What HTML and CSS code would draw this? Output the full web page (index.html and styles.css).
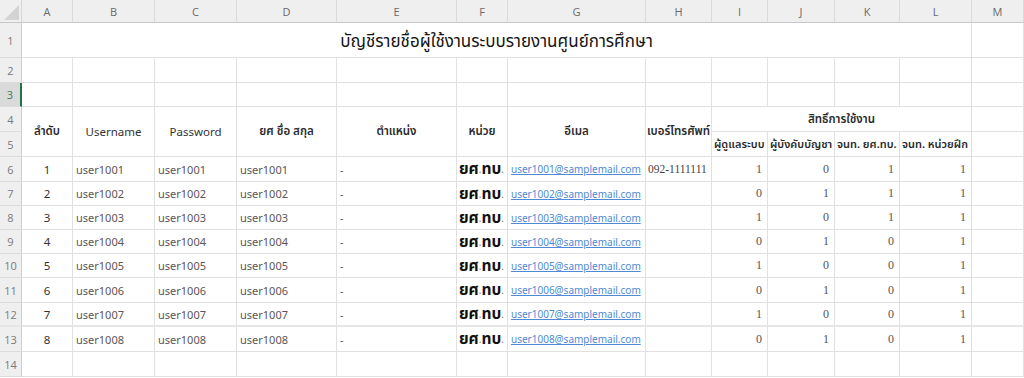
FILE: index.html
```html
<!DOCTYPE html>
<html lang="th">
<head>
<meta charset="utf-8">
<title>บัญชีรายชื่อผู้ใช้งาน</title>
<link rel="stylesheet" href="styles.css">
</head>
<body>
<div class="sheet">
  <div class="row colhead">
    <div class="corner"><svg width="22" height="23" viewBox="0 0 22 23"><polygon points="19,5 19,20 4,20" fill="#d3d3d3"/></svg></div>
    <div class="ch">A</div><div class="ch">B</div><div class="ch">C</div><div class="ch">D</div><div class="ch">E</div><div class="ch">F</div><div class="ch">G</div><div class="ch">H</div><div class="ch">I</div><div class="ch">J</div><div class="ch">K</div><div class="ch">L</div><div class="ch">M</div>
  </div>
  <div class="row">
    <div class="rh">1</div>
    <div class="cell title">บัญชีรายชื่อผู้ใช้งานระบบรายงานศูนย์การศึกษา</div>
    <div class="cell"></div>
  </div>
  <div class="row">
    <div class="rh">2</div>
    <div class="cell"></div><div class="cell"></div><div class="cell"></div><div class="cell"></div><div class="cell"></div><div class="cell"></div><div class="cell"></div><div class="cell"></div><div class="cell"></div><div class="cell"></div><div class="cell"></div><div class="cell"></div><div class="cell"></div>
  </div>
  <div class="row">
    <div class="rh sel">3</div>
    <div class="cell"></div><div class="cell"></div><div class="cell"></div><div class="cell"></div><div class="cell"></div><div class="cell"></div><div class="cell"></div><div class="cell"></div><div class="cell"></div><div class="cell"></div><div class="cell"></div><div class="cell"></div><div class="cell"></div>
  </div>
  <div class="row">
    <div class="rh">4</div>
    <div class="cell hd tall">ลำดับ</div>
    <div class="cell hd tall en">Username</div>
    <div class="cell hd tall en">Password</div>
    <div class="cell hd tall">ยศ ชื่อ สกุล</div>
    <div class="cell hd tall">ตำแหน่ง</div>
    <div class="cell hd tall">หน่วย</div>
    <div class="cell hd tall">อีเมล</div>
    <div class="cell hd tall">เบอร์โทรศัพท์</div>
    <div class="cell hd group">สิทธิ์การใช้งาน</div>
    <div class="cell"></div>
  </div>
  <div class="row">
    <div class="rh">5</div>
    <div class="cell hd sub">ผู้ดูแลระบบ</div>
    <div class="cell hd sub">ผู้บังคับบัญชา</div>
    <div class="cell hd sub">จนท. ยศ.ทบ.</div>
    <div class="cell hd sub">จนท. หน่วยฝึก</div>
    <div class="cell"></div>
  </div>

  <div class="row">
    <div class="rh">6</div>
    <div class="cell num">1</div><div class="cell txt">user1001</div><div class="cell txt">user1001</div><div class="cell txt">user1001</div><div class="cell txt">-</div>
    <div class="cell unit"><b>ยศ</b><i>.</i><b>ทบ</b><i>.</i></div>
    <div class="cell mail"><a href="#">user1001@samplemail.com</a></div>
    <div class="cell phone">092-1111111</div>
    <div class="cell val">1</div><div class="cell val">0</div><div class="cell val">1</div><div class="cell val">1</div><div class="cell"></div>
  </div>
  <div class="row">
    <div class="rh">7</div>
    <div class="cell num">2</div><div class="cell txt">user1002</div><div class="cell txt">user1002</div><div class="cell txt">user1002</div><div class="cell txt">-</div>
    <div class="cell unit"><b>ยศ</b><i>.</i><b>ทบ</b><i>.</i></div>
    <div class="cell mail"><a href="#">user1002@samplemail.com</a></div>
    <div class="cell phone"></div>
    <div class="cell val">0</div><div class="cell val">1</div><div class="cell val">1</div><div class="cell val">1</div><div class="cell"></div>
  </div>
  <div class="row">
    <div class="rh">8</div>
    <div class="cell num">3</div><div class="cell txt">user1003</div><div class="cell txt">user1003</div><div class="cell txt">user1003</div><div class="cell txt">-</div>
    <div class="cell unit"><b>ยศ</b><i>.</i><b>ทบ</b><i>.</i></div>
    <div class="cell mail"><a href="#">user1003@samplemail.com</a></div>
    <div class="cell phone"></div>
    <div class="cell val">1</div><div class="cell val">0</div><div class="cell val">1</div><div class="cell val">1</div><div class="cell"></div>
  </div>
  <div class="row">
    <div class="rh">9</div>
    <div class="cell num">4</div><div class="cell txt">user1004</div><div class="cell txt">user1004</div><div class="cell txt">user1004</div><div class="cell txt">-</div>
    <div class="cell unit"><b>ยศ</b><i>.</i><b>ทบ</b><i>.</i></div>
    <div class="cell mail"><a href="#">user1004@samplemail.com</a></div>
    <div class="cell phone"></div>
    <div class="cell val">0</div><div class="cell val">1</div><div class="cell val">0</div><div class="cell val">1</div><div class="cell"></div>
  </div>
  <div class="row">
    <div class="rh">10</div>
    <div class="cell num">5</div><div class="cell txt">user1005</div><div class="cell txt">user1005</div><div class="cell txt">user1005</div><div class="cell txt">-</div>
    <div class="cell unit"><b>ยศ</b><i>.</i><b>ทบ</b><i>.</i></div>
    <div class="cell mail"><a href="#">user1005@samplemail.com</a></div>
    <div class="cell phone"></div>
    <div class="cell val">1</div><div class="cell val">0</div><div class="cell val">0</div><div class="cell val">1</div><div class="cell"></div>
  </div>
  <div class="row">
    <div class="rh">11</div>
    <div class="cell num">6</div><div class="cell txt">user1006</div><div class="cell txt">user1006</div><div class="cell txt">user1006</div><div class="cell txt">-</div>
    <div class="cell unit"><b>ยศ</b><i>.</i><b>ทบ</b><i>.</i></div>
    <div class="cell mail"><a href="#">user1006@samplemail.com</a></div>
    <div class="cell phone"></div>
    <div class="cell val">0</div><div class="cell val">1</div><div class="cell val">0</div><div class="cell val">1</div><div class="cell"></div>
  </div>
  <div class="row split">
    <div class="rh">12</div>
    <div class="cell num">7</div><div class="cell txt">user1007</div><div class="cell txt">user1007</div><div class="cell txt">user1007</div><div class="cell txt">-</div>
    <div class="cell unit"><b>ยศ</b><i>.</i><b>ทบ</b><i>.</i></div>
    <div class="cell mail"><a href="#">user1007@samplemail.com</a></div>
    <div class="cell phone"></div>
    <div class="cell val">1</div><div class="cell val">0</div><div class="cell val">0</div><div class="cell val">1</div><div class="cell"></div>
  </div>
  <div class="row">
    <div class="rh">13</div>
    <div class="cell num">8</div><div class="cell txt">user1008</div><div class="cell txt">user1008</div><div class="cell txt">user1008</div><div class="cell txt">-</div>
    <div class="cell unit"><b>ยศ</b><i>.</i><b>ทบ</b><i>.</i></div>
    <div class="cell mail"><a href="#">user1008@samplemail.com</a></div>
    <div class="cell phone"></div>
    <div class="cell val">0</div><div class="cell val">1</div><div class="cell val">0</div><div class="cell val">1</div><div class="cell"></div>
  </div>
  <div class="row">
    <div class="rh">14</div>
    <div class="cell"></div><div class="cell"></div><div class="cell"></div><div class="cell"></div><div class="cell"></div><div class="cell"></div><div class="cell"></div><div class="cell"></div><div class="cell"></div><div class="cell"></div><div class="cell"></div><div class="cell"></div><div class="cell"></div>
  </div>
</div>
</body>
</html>
```
FILE: styles.css
```css
* { box-sizing: border-box; }
html, body { margin: 0; padding: 0; background: #ffffff; }
body {
  font-family: "Noto Sans", "Noto Sans Thai", "Open Sans", sans-serif;
  color: #222;
}
.sheet {
  display: grid;
  width: 1024px;
  height: 378px;
  overflow: hidden;
  grid-template-columns: 22px 51px 82px 82px 100px 120px 51px 138px 66px 56px 67px 65px 72px 52px;
  grid-template-rows: 23px 35px 25px 24px 25px 25px 25px 24px 24px 24px 24px 25px 24px 25px 25px;
}
.row { display: contents; }

.corner {
  background: #efefef;
  border-right: 1px solid #d6d6d6;
  border-bottom: 1px solid #c6c6c6;
}
.corner svg { display: block; }
.ch {
  background: #efefef;
  border-right: 1px solid #dadada;
  border-bottom: 1px solid #c6c6c6;
  color: #6a6a6a;
  font-family: "Open Sans", sans-serif;
  font-size: 11px;
  display: flex;
  align-items: center;
  justify-content: center;
}
.rh {
  grid-column: 1;
  background: #efefef;
  border-right: 1px solid #cfcfcf;
  border-bottom: 1px solid #dcdcdc;
  color: #7a7a7a;
  font-family: "Open Sans", sans-serif;
  font-size: 11px;
  display: flex;
  align-items: center;
  justify-content: center;
}
.rh.sel {
  background: #dadada;
  border-right: 2px solid #217346;
  color: #3a7a56;
}
.cell {
  border-right: 1px solid #e1e1e1;
  border-bottom: 1px solid #e1e1e1;
  display: flex;
  align-items: center;
  padding: 0 3px;
  white-space: nowrap;
  min-width: 0;
  font-size: 11px;
}
.split > .cell, .split > .rh { border-bottom: 2px solid #e6e6e6; }

.title {
  grid-column: span 12;
  justify-content: center;
  font-size: 17px;
  color: #151515;
  padding-top: 3px;
}
.hd {
  justify-content: center;
  font-size: 11.5px;
  font-weight: 600;
  color: #2a2a2a;
}
.hd.en { font-weight: 400; color: #333; }
.hd.tall { grid-row: span 2; }
.hd.group { grid-column: span 4; }
.hd.sub { justify-content: flex-start; padding: 0 0 0 2px; font-size: 11px; }

.num { justify-content: center; color: #333; font-size: 11.5px; }
.txt { color: #5c5656; font-size: 11px; }
.unit { justify-content: flex-end; padding: 0 3px 0 0; }
.unit b { font-weight: 700; font-size: 15.5px; color: #111; }
.unit i { font-style: normal; font-size: 10px; color: #777; }
.mail a { color: #4f8ad6; font-size: 10px; text-decoration: underline; }
.phone { font-family: "Liberation Serif", serif; font-size: 11.5px; color: #444; padding: 0 2px; }
.val {
  justify-content: flex-end;
  font-family: "Liberation Serif", serif;
  font-size: 12px;
  color: #555;
  padding-right: 5px;
}
```
